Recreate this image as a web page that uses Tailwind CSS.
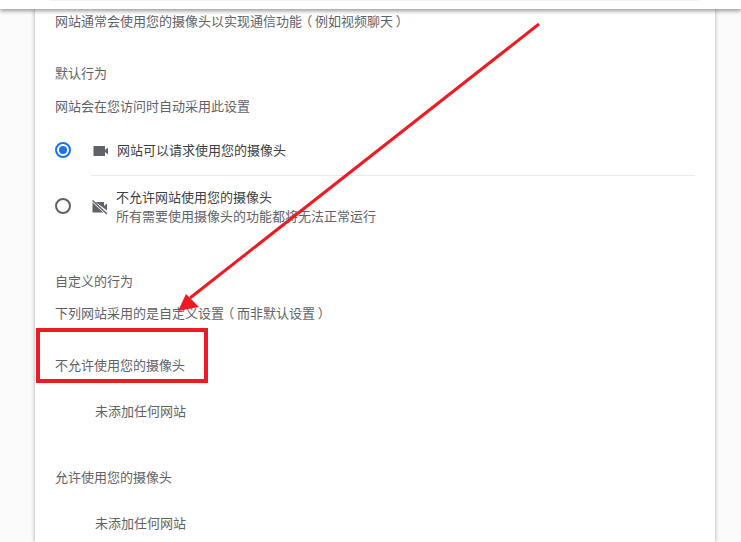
<!DOCTYPE html>
<html lang="zh-CN">
<head>
<meta charset="utf-8">
<title>摄像头</title>
<script src="https://cdn.jsdelivr.net/npm/@tailwindcss/browser@4"></script>
</head>
<body class="m-0">
<div class="relative w-[741px] h-[542px] overflow-hidden bg-[#fbfbfb] text-[13px] text-[#5f6368] font-['Liberation_Sans','Noto_Sans_CJK_SC',sans-serif]">
  <header class="relative z-10 h-[9px] bg-white shadow-[0_2px_4px_rgba(0,0,0,0.4)]"><div class="ml-[50px] w-[650px] h-px bg-[#f1f3f4]"></div></header>
  <main class="ml-[35px] w-[680px] h-[533px] bg-white shadow-[0_0_4px_rgba(0,0,0,0.35)] pl-[20px] pr-[20px]">
    <p class="h-[26px] leading-[26px]">网站通常会使用您的摄像头以实现通信功能<span class="inline-block w-[13px] text-center [font-feature-settings:'palt']">（</span>例如视频聊天<span class="inline-block w-[13px] text-center [font-feature-settings:'palt']">）</span></p>
    <p class="mt-[26px] h-[26px] leading-[26px]">默认行为</p>
    <p class="mt-[7px] h-[26px] leading-[26px]">网站会在您访问时自动采用此设置</p>
    <div class="mt-[5px] h-[50px] flex items-center">
      <span class="w-[16px] h-[16px] rounded-full border-2 border-[#1a73e8] flex items-center justify-center"><span class="w-[8px] h-[8px] rounded-full bg-[#1a73e8]"></span></span>
      <svg class="ml-[22px] mt-[1px] w-[16px] h-[16px]" viewBox="0 0 16 16"><path fill="#5f6368" d="M1 3h10.500a.5.5 0 0 1 .5.5V7l3-2.500v7L12 9v3.500a.5.5 0 0 1-.5.5H1a.5.5 0 0 1-.5-.5v-9A.5.5 0 0 1 1 3z"/></svg>
      <span class="ml-[8px] mt-[1px] text-[#3c4043]">网站可以请求使用您的摄像头</span>
    </div>
    <div class="ml-[36px] border-t border-[#e8eaed] h-[60px] flex items-center relative">
      <span class="absolute -left-[36px] top-[22px] w-[16px] h-[16px] rounded-full border-2 border-[#5f6368]"></span>
      <svg class="ml-[1px] w-[16px] h-[16px] mt-[3px]" viewBox="0 0 16 16"><path fill="#5f6368" d="M.5 3.500V13a.5.5 0 0 0 .5.5h10.300zM3.500 3h8a.5.5 0 0 1 .5.5V7l3-2.500v7l-1 -.8z"/><path stroke="#5f6368" stroke-width="1.500" d="M.5 1.500 15 15"/></svg>
      <div class="ml-[8px] mt-[2px] leading-[19px]">
        <p class="text-[#3c4043]">不允许网站使用您的摄像头</p>
        <p>所有需要使用摄像头的功能都将无法正常运行</p>
      </div>
    </div>
    <p class="mt-[34px] h-[26px] leading-[26px]">自定义的行为</p>
    <p class="mt-[6px] h-[26px] leading-[26px]">下列网站采用的是自定义设置<span class="inline-block w-[13px] text-center [font-feature-settings:'palt']">（</span>而非默认设置<span class="inline-block w-[13px] text-center [font-feature-settings:'palt']">）</span></p>
    <p class="mt-[26px] h-[26px] leading-[26px]">不允许使用您的摄像头</p>
    <p class="mt-[20px] h-[26px] leading-[26px] pl-[40px]">未添加任何网站</p>
    <p class="mt-[40px] h-[26px] leading-[26px]">允许使用您的摄像头</p>
    <p class="mt-[20px] h-[26px] leading-[26px] pl-[40px]">未添加任何网站</p>
  </main>
  <svg class="absolute inset-0 z-20 w-[741px] h-[542px]" viewBox="0 0 741 542">
    <line x1="539" y1="24" x2="190" y2="298" stroke="#ed1c24" stroke-width="3"/>
    <polygon points="178,311 186,294 199,307" fill="#ed1c24"/>
    <rect x="38" y="330" width="168" height="51" fill="none" stroke="#ed1c24" stroke-width="4"/>
  </svg>
</div>
</body>
</html>
